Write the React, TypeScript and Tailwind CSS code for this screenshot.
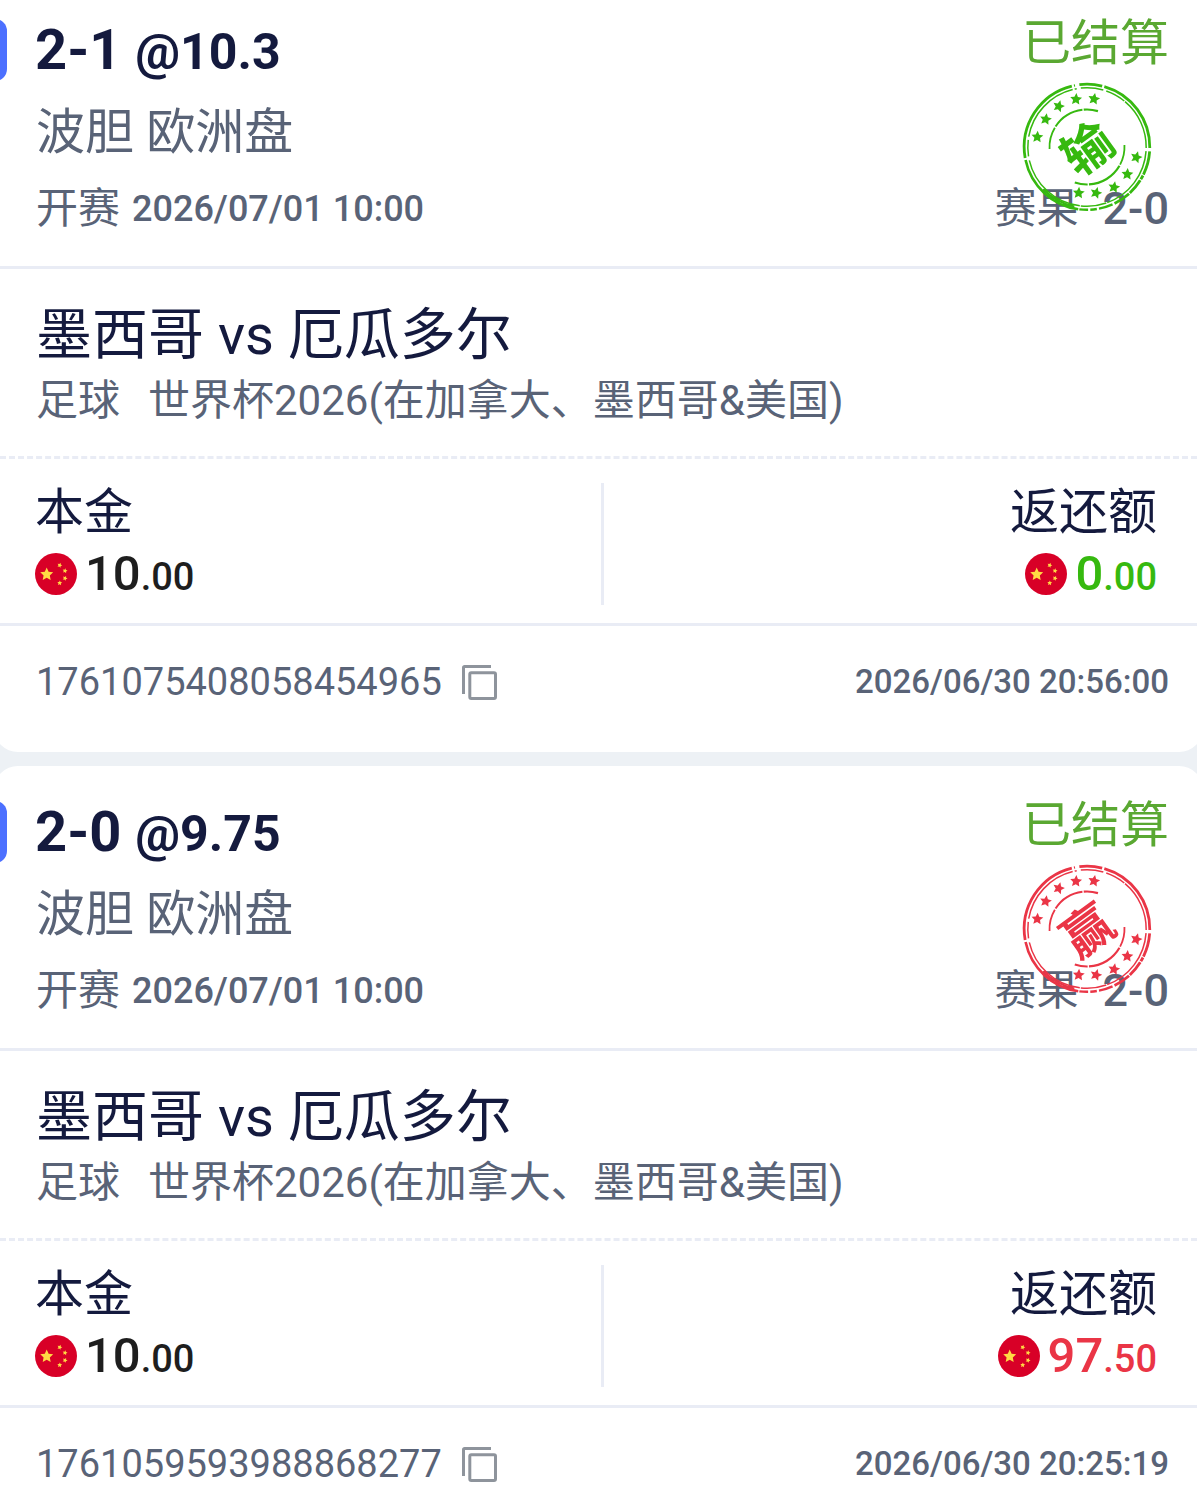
import { clsx } from "clsx";

type Bet = {
  id: string;
  pick: string;
  odds: string;
  market: string;
  kickoff: string;
  score: string;
  home: string;
  away: string;
  sport: string;
  league: string;
  stake: string;
  payout: string;
  won: boolean;
  placedAt: string;
};

const bets: Bet[] = [
  {
    id: "1761075408058454965",
    pick: "2-1",
    odds: "10.3",
    market: "波胆 欧洲盘",
    kickoff: "2026/07/01 10:00",
    score: "2-0",
    home: "墨西哥",
    away: "厄瓜多尔",
    sport: "足球",
    league: "世界杯2026(在加拿大、墨西哥&美国)",
    stake: "10.00",
    payout: "0.00",
    won: false,
    placedAt: "2026/06/30 20:56:00",
  },
  {
    id: "1761059593988868277",
    pick: "2-0",
    odds: "9.75",
    market: "波胆 欧洲盘",
    kickoff: "2026/07/01 10:00",
    score: "2-0",
    home: "墨西哥",
    away: "厄瓜多尔",
    sport: "足球",
    league: "世界杯2026(在加拿大、墨西哥&美国)",
    stake: "10.00",
    payout: "97.50",
    won: true,
    placedAt: "2026/06/30 20:25:19",
  },
];

// five-pointed star centred on x, y; tilt in degrees
function starPoints(x: number, y: number, r: number, tilt = 0) {
  return Array.from({ length: 10 }, (_, i) => {
    const a = ((i * 36 - 90 + tilt) * Math.PI) / 180;
    const d = i % 2 === 0 ? r : r * 0.48;
    return `${(x + d * Math.cos(a)).toFixed(2)},${(y + d * Math.sin(a)).toFixed(2)}`;
  }).join(" ");
}

// arc around the centre of the 128px stamp, angles clockwise from the right
function arc(r: number, from: number, to: number) {
  const pt = (deg: number) => {
    const a = (deg * Math.PI) / 180;
    return `${(64 + r * Math.cos(a)).toFixed(2)} ${(64 + r * Math.sin(a)).toFixed(2)}`;
  };
  return `M${pt(from)}A${r} ${r} 0 ${to - from > 180 ? 1 : 0} 1 ${pt(to)}`;
}

// [radius, from, to, stroke width]
const arcs = [
  [62.8, 4, 26, 2.8],
  [62.8, 27, 31, 2.8],
  [62.8, 32, 47, 2.8],
  [62.8, 48, 64, 2.8],
  [62.8, 66, 79, 2.4],
  [62.8, 81, 87, 2.4],
  [62.8, 89, 97, 2.4],
  [62.8, 98, 168, 2.6],
  [62.8, 170, 256, 2.8],
  [62.8, 258, 259, 2.4],
  [62.8, 263, 284, 2.8],
  [62.8, 286, 361, 2.8],
  [60.8, 102, 136, 2.2],
  [59.2, 4, 70, 1.5],
  [59.2, 71, 96, 1.5],
  [59.2, 97, 167, 1.5],
  [59.2, 171, 187, 1.5],
  [59.2, 190, 256, 1.5],
  [59.2, 258, 260, 1.5],
  [59.2, 264, 286, 1.5],
  [59.2, 289, 309, 1.5],
  [59.2, 310, 361, 1.5],
  [37.5, -3, 28, 1.8],
  [37.5, 30, 87, 2.2],
  [37.5, 89, 109, 2.2],
  [37.5, 177, 211, 1.8],
  [37.5, 213, 263, 2],
  [37.5, 265, 287, 2.2],
];
const stars = [
  [14.3, 54],
  [22.7, 36.3],
  [35.7, 23.3],
  [53, 16.3],
  [71, 16],
  [113.3, 74.3],
  [104.3, 91.3],
  [91, 104.3],
  [73, 110],
  [55.7, 110],
];

function Stamp({ won }: { won: boolean }) {
  return (
    <svg
      viewBox="0 0 128 128"
      className={clsx(
        "absolute top-[69px] right-[18px] size-32 overflow-visible",
        won ? "text-[#ea3546]" : "text-[#36b90f]",
      )}
      fill="none"
      stroke="currentColor"
    >
      {arcs.map(([r, from, to, width]) => (
        <path key={`${r}-${from}`} d={arc(r, from, to)} strokeWidth={width} />
      ))}
      {stars.map(([x, y], i) => (
        <polygon
          key={i}
          points={starPoints(x, y, 6.2, (i % 3) * 6 + 4)}
          fill="currentColor"
          stroke="none"
        />
      ))}
      <text
        x="65"
        y="83"
        textAnchor="middle"
        transform="rotate(-36 66 66)"
        fill="currentColor"
        stroke="none"
        className="font-['Noto_Sans_CJK_SC',sans-serif] text-[50px] font-bold"
      >
        {won ? "赢" : "输"}
      </text>
    </svg>
  );
}

function Flag() {
  return (
    <svg viewBox="0 0 42 42" className="size-[42px] shrink-0">
      <circle cx="21" cy="21" r="21" fill="#d80027" />
      <g fill="#ffda44">
        <polygon points={starPoints(11.7, 21.4, 6.8)} />
        <polygon points={starPoints(24.7, 12.3, 2.6, 20)} />
        <polygon points={starPoints(30, 17.8, 2.6, 10)} />
        <polygon points={starPoints(30, 25.3, 2.6, 25)} />
        <polygon points={starPoints(24.7, 30, 2.6, 5)} />
      </g>
    </svg>
  );
}

function CopyIcon() {
  return (
    <svg
      viewBox="0 0 35 35"
      className="size-[35px]"
      fill="none"
      stroke="#8e949c"
      strokeWidth="3"
    >
      <path d="M29 1.5H2.5a1 1 0 0 0-1 1V29" />
      <rect x="7.8" y="7.8" width="25.7" height="25.7" rx="1.5" />
    </svg>
  );
}

function Amount({ value, className }: { value: string; className: string }) {
  const [whole, cents] = value.split(".");
  return (
    <div className="flex h-[62px] items-center gap-2">
      <Flag />
      <p className={clsx("text-[49px] leading-[62px] font-medium", className)}>
        {whole}
        <span className="text-[38px] leading-none">.{cents}</span>
      </p>
    </div>
  );
}

function BetCard({ bet }: { bet: Bet }) {
  return (
    <article className="-mx-1.5 rounded-3xl bg-white px-1.5 text-[#596377]">
      <header className="flex justify-between border-b-[3px] border-[#e9ecf5] pr-7 pb-[27px]">
        <div className="pt-[35px]">
          <div className="flex items-center gap-7">
            <span className="-ml-1.5 h-[62px] w-[13px] rounded-r-xl bg-[#4c70ff]" />
            <h2 className="text-[56px] leading-[62px] font-bold text-[#141a3e]">
              {bet.pick}{" "}
              <span className="text-[50px] leading-none">@{bet.odds}</span>
            </h2>
          </div>
          <p className="mt-[22px] pl-9 text-[49px] leading-[60px]">{bet.market}</p>
          <p className="mt-4 flex gap-3 pl-9 text-[42px] leading-[60px]">
            开赛
            <time className="text-[36px] font-medium">{bet.kickoff}</time>
          </p>
        </div>
        <div className="relative mt-[30px] flex flex-col items-end justify-between">
          <p className="text-[49px] leading-[60px] text-[#5aa832]">已结算</p>
          <p className="flex gap-6 text-[42px] leading-[60px]">
            赛果
            <span className="text-[45px] font-medium">{bet.score}</span>
          </p>
          <Stamp won={bet.won} />
        </div>
      </header>

      <section className="border-b-[3px] border-dashed border-[#e9ecf5] px-9 pt-[30px] pb-[25px]">
        <h3 className="text-[56px] leading-[72px] text-[#141a3e]">
          {bet.home} vs {bet.away}
        </h3>
        <p className="flex gap-7 text-[42px] leading-[60px]">
          <span>{bet.sport}</span>
          <span>{bet.league}</span>
        </p>
      </section>

      <section className="flex border-b-[3px] border-[#e9ecf5] pt-6 pb-[18px]">
        <div className="flex-1 pr-3 pl-[35px]">
          <p className="text-[49px] leading-[60px] text-[#141a3e]">本金</p>
          <Amount value={bet.stake} className="text-[#1e1e1e]" />
        </div>
        <div className="w-[3px] bg-[#e9ecf5]" />
        <div className="flex flex-1 flex-col items-end pr-10">
          <p className="text-[49px] leading-[60px] text-[#141a3e]">返还额</p>
          <Amount
            value={bet.payout}
            className={bet.won ? "text-[#ea3546]" : "text-[#36b90f]"}
          />
        </div>
      </section>

      <footer className="flex items-center justify-between pt-[26px] pr-7 pb-10 pl-9">
        <div className="flex items-center gap-5">
          <span className="text-[38px] leading-[60px]">{bet.id}</span>
          <button type="button" aria-label="复制">
            <CopyIcon />
          </button>
        </div>
        <time className="text-[33px] leading-[60px] font-medium">
          {bet.placedAt}
        </time>
      </footer>
    </article>
  );
}

export default function App() {
  return (
    <main className="h-screen overflow-hidden bg-[#edf1f5] font-[Roboto,'Noto_Sans_CJK_SC',sans-serif]">
      <div className="-mt-4 flex flex-col gap-3.5">
        {bets.map((bet) => (
          <BetCard key={bet.id} bet={bet} />
        ))}
      </div>
    </main>
  );
}
